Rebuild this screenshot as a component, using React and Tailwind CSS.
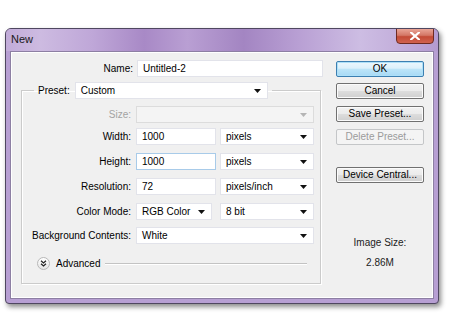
import React from "react";

const font = { fontFamily: '"Liberation Sans", Arial, sans-serif' };

function Arrow({ disabled }) {
  return (
    <svg width="7" height="4" viewBox="0 0 7 4" className="shrink-0">
      <polygon points="0,0 7,0 3.5,4" fill={disabled ? "#b5b5b5" : "#111"} />
    </svg>
  );
}

function Select({ value, w, disabled, extra }) {
  return (
    <div
      className={`${w} ${extra || ""} h-[17px] flex items-center justify-between pl-[5px] pr-[6px] border ${
        disabled ? "bg-[#f4f4f4] border-[#dcdcdc]" : "bg-white border-[#e2e3ea]"
      }`}
    >
      <span className="leading-none">{value}</span>
      <Arrow disabled={disabled} />
    </div>
  );
}

function Input({ value, w, focused }) {
  return (
    <div
      className={`${w} h-[17px] flex items-center pl-[5px] bg-white border ${
        focused ? "border-[#a8cbe9]" : "border-[#e2e3ea]"
      }`}
    >
      <span className="leading-none">{value}</span>
    </div>
  );
}

function Row({ label, children, mt, disabled }) {
  return (
    <div className={`flex items-center h-[17px] ${mt}`}>
      <div className={`w-[110px] text-right pr-px ${disabled ? "text-[#a3a3a3]" : "text-black"}`}>{label}</div>
      <div className="flex items-center gap-[4px] ml-[4px]">{children}</div>
    </div>
  );
}

function Button({ children, mt, primary, disabled }) {
  const base =
    "w-[88px] h-[16px] flex items-center justify-center rounded-[2px] border leading-none";
  let cls;
  if (primary)
    cls =
      "border-[#3c7fb1] bg-[linear-gradient(#ecf7fd_0%,#dcf0fb_45%,#bde5f8_50%,#a7d9f5_100%)] shadow-[inset_0_0_0_1px_#aee0f8]";
  else if (disabled)
    cls = "border-[#c4c6c8] bg-[#f4f4f4] text-[#9b9b9b]";
  else
    cls =
      "border-[#707070] bg-[linear-gradient(#f2f2f2_0%,#ebebeb_48%,#dddddd_50%,#cfcfcf_100%)] shadow-[inset_0_0_0_1px_#fbfbfb]";
  return <div className={`${base} ${cls} ${mt}`}>{children}</div>;
}

export default function App() {
  return (
    <div className="w-[450px] h-[327px] bg-white pt-[28px] pl-[5px] text-[10px] text-black" style={font}>
      <div className="w-[434px] h-[276px] flex flex-col border border-[#4f4760] rounded-t-[6px] rounded-b-[4px] bg-[#b79fd3] shadow-[2px_3px_5px_rgba(0,0,0,0.45)] overflow-hidden">
        {/* Title bar */}
        <div className="h-[22px] flex justify-between items-start bg-[linear-gradient(90deg,#c2acd9_0%,#cdbbe1_8%,#bfa7d8_20%,#a889c6_32%,#b99fd3_42%,#a385c2_55%,#b9a0d4_68%,#cdbde3_82%,#c4b0dc_90%,#b49bd1_100%)]">
          <span className="ml-[5px] mt-[5px] text-[11px] text-[#1a1a1a] leading-none">New</span>
          <div className="mr-[4px] -mt-px w-[38px] h-[16px] rounded-b-[4px] border border-[#6e2a22] bg-[linear-gradient(#eaa496_0%,#d47766_45%,#c34a36_55%,#d1634f_100%)] flex items-center justify-center">
            <svg width="10" height="8" viewBox="0 0 10 8">
              <path d="M1 0.5 L9 7.5 M9 0.5 L1 7.5" stroke="#fff" strokeWidth="2.2" strokeLinecap="square" />
            </svg>
          </div>
        </div>
        {/* Content */}
        <div className="mx-[4px] mb-[4px] flex-1 bg-[#f0f0f0] border border-[#8d7fa3] shadow-[inset_0_0_0_1px_#ffffff] flex">
          {/* Left column */}
          <div className="w-[325px] pt-[8px]">
            <div className="flex items-center h-[17px]">
              <div className="w-[122px] text-right">Name:</div>
              <div className="ml-[4px]">
                <Input value="Untitled-2" w="w-[186px]" />
              </div>
            </div>
            <fieldset className="ml-[10px] mt-[5px] w-[300px] border border-[#cbcbcb] shadow-[inset_1px_1px_0_#fff,1px_1px_0_#fff] pb-[13px]">
              <legend className="ml-[12px] px-[4px] flex items-center">
                <span className="mr-[5px]">Preset:</span>
                <Select value="Custom" w="w-[193px]" />
              </legend>
              <Row label="Size:" mt="mt-[7px]" disabled>
                <Select value="" w="w-[178px]" disabled />
              </Row>
              <Row label="Width:" mt="mt-[5px]">
                <Input value="1000" w="w-[80px]" />
                <Select value="pixels" w="w-[94px]" />
              </Row>
              <Row label="Height:" mt="mt-[8px]">
                <Input value="1000" w="w-[80px]" focused />
                <Select value="pixels" w="w-[94px]" />
              </Row>
              <Row label="Resolution:" mt="mt-[8px]">
                <Input value="72" w="w-[80px]" />
                <Select value="pixels/inch" w="w-[94px]" />
              </Row>
              <Row label="Color Mode:" mt="mt-[8px]">
                <Select value="RGB Color" w="w-[76px]" />
                <Select value="8 bit" w="w-[94px]" extra="ml-[4px]" />
              </Row>
              <Row label="Background Contents:" mt="mt-[7px]">
                <Select value="White" w="w-[178px]" />
              </Row>
              <div className="flex items-center h-[13px] mt-[13px] ml-[15px] mr-[13px]">
                <div className="w-[13px] h-[13px] rounded-full border border-[#b8b8b8] bg-[linear-gradient(#ffffff,#e4e4e4)] flex items-center justify-center">
                  <svg width="7" height="7" viewBox="0 0 7 7">
                    <path d="M1 0.8 L3.5 3 L6 0.8 M1 3.8 L3.5 6 L6 3.8" stroke="#222" strokeWidth="1.2" fill="none" />
                  </svg>
                </div>
                <span className="ml-[6px] text-[10px] leading-none">Advanced</span>
                <div className="flex-1 ml-[5px] h-px bg-[#c3c3c3] shadow-[0_1px_0_#fff]" />
              </div>
            </fieldset>
          </div>
          {/* Right column */}
          <div className="w-[88px] pt-[9px] flex flex-col items-center">
            <Button primary>OK</Button>
            <Button mt="mt-[6px]">Cancel</Button>
            <Button mt="mt-[7px]">Save Preset...</Button>
            <Button mt="mt-[7px]" disabled>Delete Preset...</Button>
            <Button mt="mt-[22px]">Device Central...</Button>
            <div className="mt-[54px] leading-[12px] text-[#222]">Image Size:</div>
            <div className="mt-[8px] leading-[12px] text-[#222]">2.86M</div>
          </div>
        </div>
      </div>
    </div>
  );
}
